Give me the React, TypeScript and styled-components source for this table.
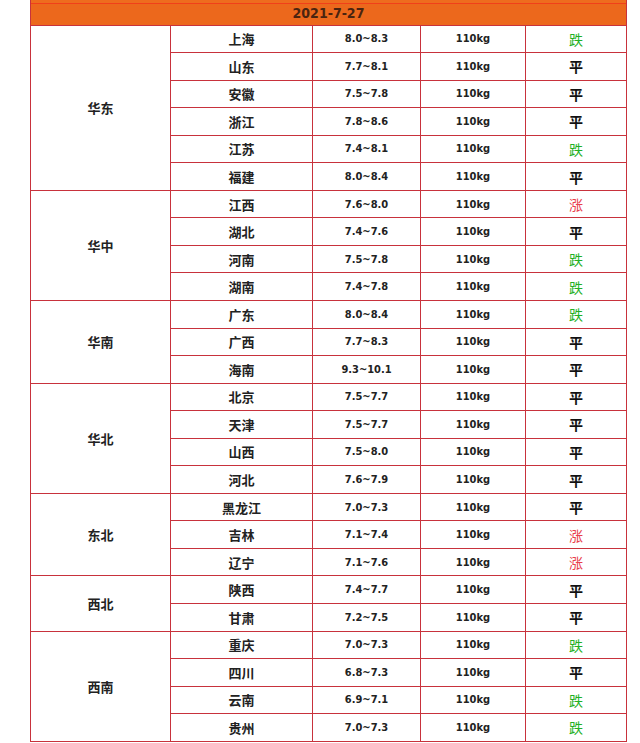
import styled, { createGlobalStyle } from 'styled-components';

type Trend = '跌' | '平' | '涨';

interface Row {
  province: string;
  price: string;
  trend: Trend;
}

interface Region {
  name: string;
  rows: Row[];
}

const regions: Region[] = [
  {
    name: '华东',
    rows: [
      { province: '上海', price: '8.0~8.3', trend: '跌' },
      { province: '山东', price: '7.7~8.1', trend: '平' },
      { province: '安徽', price: '7.5~7.8', trend: '平' },
      { province: '浙江', price: '7.8~8.6', trend: '平' },
      { province: '江苏', price: '7.4~8.1', trend: '跌' },
      { province: '福建', price: '8.0~8.4', trend: '平' },
    ],
  },
  {
    name: '华中',
    rows: [
      { province: '江西', price: '7.6~8.0', trend: '涨' },
      { province: '湖北', price: '7.4~7.6', trend: '平' },
      { province: '河南', price: '7.5~7.8', trend: '跌' },
      { province: '湖南', price: '7.4~7.8', trend: '跌' },
    ],
  },
  {
    name: '华南',
    rows: [
      { province: '广东', price: '8.0~8.4', trend: '跌' },
      { province: '广西', price: '7.7~8.3', trend: '平' },
      { province: '海南', price: '9.3~10.1', trend: '平' },
    ],
  },
  {
    name: '华北',
    rows: [
      { province: '北京', price: '7.5~7.7', trend: '平' },
      { province: '天津', price: '7.5~7.7', trend: '平' },
      { province: '山西', price: '7.5~8.0', trend: '平' },
      { province: '河北', price: '7.6~7.9', trend: '平' },
    ],
  },
  {
    name: '东北',
    rows: [
      { province: '黑龙江', price: '7.0~7.3', trend: '平' },
      { province: '吉林', price: '7.1~7.4', trend: '涨' },
      { province: '辽宁', price: '7.1~7.6', trend: '涨' },
    ],
  },
  {
    name: '西北',
    rows: [
      { province: '陕西', price: '7.4~7.7', trend: '平' },
      { province: '甘肃', price: '7.2~7.5', trend: '平' },
    ],
  },
  {
    name: '西南',
    rows: [
      { province: '重庆', price: '7.0~7.3', trend: '跌' },
      { province: '四川', price: '6.8~7.3', trend: '平' },
      { province: '云南', price: '6.9~7.1', trend: '跌' },
      { province: '贵州', price: '7.0~7.3', trend: '跌' },
    ],
  },
];

const columnWidths = [140, 142, 108, 105, 101];

const trendColor: Record<Trend, string> = {
  跌: '#22b024',
  平: '#111111',
  涨: '#e8404c',
};

const GlobalStyle = createGlobalStyle`
  html, body {
    margin: 0;
    padding: 0;
    background: #ffffff;
  }
`;

const Page = styled.div`
  padding-left: 30px;
  width: 596px;
`;

const Table = styled.table`
  width: 596px;
  table-layout: fixed;
  border-collapse: collapse;
  font-family: "DejaVu Sans Condensed", "DejaVu Sans", "Noto Sans CJK SC", sans-serif;
`;

const Col = styled.col<{ $width: number }>`
  width: ${p => p.$width}px;
`;

const HeaderCell = styled.th`
  height: 25px;
  padding: 2px 0 0;
  box-sizing: border-box;
  background: #ec681c;
  box-shadow: inset 0 3px 0 #ee6c1e, inset 0 4px 0 #f0401a;
  color: #4a2410;
  font-size: 14px;
  font-weight: bold;
  text-align: center;
  vertical-align: middle;
  border: 1px solid #c8323c;
  border-top: none;
`;

const Cell = styled.td`
  height: 26.56px;
  padding: 0;
  border: 1px solid #c8323c;
  text-align: center;
  vertical-align: middle;
  color: #222222;
`;

const RegionCell = styled(Cell)`
  font-family: "Noto Sans CJK SC", sans-serif;
  font-size: 13px;
  font-weight: bold;
`;

const ProvinceCell = styled(Cell)`
  font-family: "Noto Sans CJK SC", sans-serif;
  font-size: 13px;
  font-weight: bold;
`;

const NumberCell = styled(Cell)`
  font-size: 11px;
  font-weight: bold;
  color: #222222;
`;

const TrendCell = styled(Cell)<{ $trend: Trend }>`
  font-family: "Noto Sans CJK SC", sans-serif;
  font-size: 14px;
  font-weight: ${p => (p.$trend === '平' ? 'bold' : 'normal')};
  color: ${p => trendColor[p.$trend]};
`;

export default function App() {
  return (
    <Page>
      <GlobalStyle />
      <Table>
        <colgroup>
          {columnWidths.map((w, i) => (
            <Col key={i} $width={w} />
          ))}
        </colgroup>
        <thead>
          <tr>
            <HeaderCell colSpan={5}>2021-7-27</HeaderCell>
          </tr>
        </thead>
        <tbody>
          {regions.map(region =>
            region.rows.map((row, i) => (
              <tr key={region.name + row.province}>
                {i === 0 && <RegionCell rowSpan={region.rows.length}>{region.name}</RegionCell>}
                <ProvinceCell>{row.province}</ProvinceCell>
                <NumberCell>{row.price}</NumberCell>
                <NumberCell>110kg</NumberCell>
                <TrendCell $trend={row.trend}>{row.trend}</TrendCell>
              </tr>
            ))
          )}
        </tbody>
      </Table>
    </Page>
  );
}
